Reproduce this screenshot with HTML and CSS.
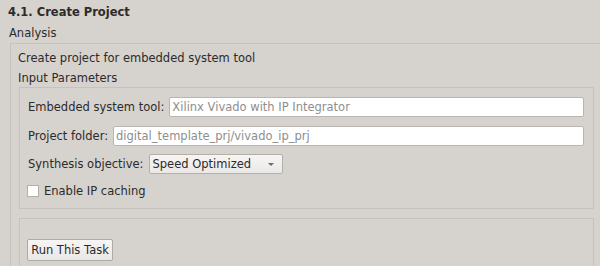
FILE: index.html
```html
<!DOCTYPE html>
<html lang="en">
<head>
  <meta charset="UTF-8">
  <title>Create Project</title>
  <link rel="stylesheet" href="styles.css">
</head>
<body>

<h1 class="title">4.1. Create Project</h1>
<div class="section-label">Analysis</div>

<div class="group">
  <div class="desc">Create project for embedded system tool</div>
  <div class="sub-label">Input Parameters</div>

  <div class="params">
    <div class="row">
      <label>Embedded system tool:</label>
      <div class="field">Xilinx Vivado with IP Integrator</div>
    </div>
    <div class="row">
      <label>Project folder:</label>
      <div class="field">digital_template_prj/vivado_ip_prj</div>
    </div>
    <div class="row row-select">
      <label>Synthesis objective:</label>
      <div class="combo">
        <span>Speed Optimized</span>
        <span class="arrow"></span>
      </div>
    </div>
    <div class="check-row">
      <span class="checkbox"></span>
      <span>Enable IP caching</span>
    </div>
  </div>

  <div class="actions">
    <button type="button" class="run-btn">Run This Task</button>
  </div>
</div>

</body>
</html>
```

FILE: styles.css
```css
* {
  margin: 0;
  padding: 0;
  box-sizing: border-box;
}

html, body {
  height: 100%;
  overflow: hidden;
}

body {
  background: #d6d2ce;
  color: #2b2b2b;
  font-family: 'DejaVu Sans', sans-serif;
  font-size: 11.5px;
  line-height: 14px;
}

.title {
  font-size: 11.5px;
  font-weight: bold;
  padding: 5px 0 0 8px;
}

.section-label {
  margin-top: 7px;
  padding-left: 9px;
}

/* frame runs off the right and bottom edges of the view */
.group {
  margin: 3px 0 0 10px;
  width: 590px;
  height: 223px;
  border: 1px solid #c6c2be;
  border-right: none;
  border-bottom: none;
  padding: 7px 0 0 7px;
}

.sub-label {
  margin-top: 6px;
}

.params {
  margin: 2px 0 0 1px;
  width: 575px;
  border: 1px solid #c6c2be;
  padding: 9px 9px 10px 8px;
}

.row {
  display: flex;
  align-items: center;
  gap: 5px;
  height: 20px;
  margin-bottom: 9px;
}

.row:nth-child(2) {
  margin-bottom: 8px;
}

.row-select {
  margin-bottom: 0;
}

.row label {
  white-space: nowrap;
  line-height: 20px;
}

.field {
  flex: 1;
  height: 20px;
  line-height: 18px;
  background: #fff;
  border: 1px solid #b9b5b1;
  border-radius: 2px;
  padding-left: 2px;
  color: #8e8e8e;
  white-space: nowrap;
  overflow: hidden;
}

.combo {
  display: flex;
  align-items: center;
  justify-content: space-between;
  width: 134px;
  height: 20px;
  padding: 0 8px 0 3px;
  background: linear-gradient(#f6f5f4, #ebe9e7);
  border: 1px solid #b3afab;
  border-radius: 2px;
}

.arrow {
  width: 0;
  height: 0;
  border-left: 3px solid transparent;
  border-right: 3px solid transparent;
  border-top: 3px solid #6a6a6a;
}

.check-row {
  display: flex;
  align-items: center;
  gap: 5px;
  margin-top: 10px;
  height: 14px;
}

.checkbox {
  width: 12px;
  height: 12px;
  background: #fff;
  border: 1px solid #b3afab;
  margin-left: -1px;
}

.actions {
  margin: 9px 0 0 1px;
  width: 575px;
  height: 48px;
  border: 1px solid #c6c2be;
  border-bottom: none;
  padding: 20px 0 0 7px;
}

.run-btn {
  font-family: 'DejaVu Sans', sans-serif;
  font-size: 11.5px;
  color: #2b2b2b;
  width: 86px;
  height: 22px;
  background: linear-gradient(#f6f5f4, #eae8e6);
  border: 1px solid #aeaaa6;
  border-radius: 2px;
}
```
